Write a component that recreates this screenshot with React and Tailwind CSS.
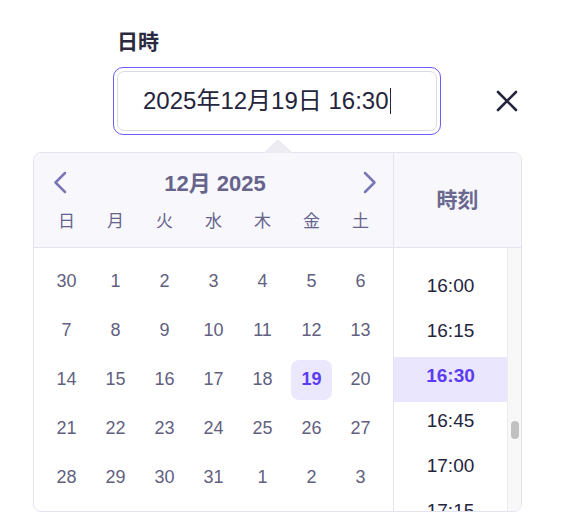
import { useLayoutEffect, useRef } from 'react'

const weekdays = ['日', '月', '火', '水', '木', '金', '土']

const days = [
  30, 1, 2, 3, 4, 5, 6,
  7, 8, 9, 10, 11, 12, 13,
  14, 15, 16, 17, 18, 19, 20,
  21, 22, 23, 24, 25, 26, 27,
  28, 29, 30, 31, 1, 2, 3,
]

const times = []
for (let h = 0; h < 24; h++) {
  for (let m = 0; m < 60; m += 15) {
    times.push(`${String(h).padStart(2, '0')}:${String(m).padStart(2, '0')}`)
  }
}

function Chevron({ dir }) {
  return (
    <svg width="16" height="24" viewBox="0 0 16 24" fill="none">
      <path
        d={dir === 'left' ? 'M13 2 L3.5 11.5 L13 21' : 'M3 2 L12.5 11.5 L3 21'}
        stroke="#7a76b6"
        strokeWidth="2.5"
        strokeLinecap="round"
        strokeLinejoin="round"
      />
    </svg>
  )
}

function App() {
  const listRef = useRef(null)

  useLayoutEffect(() => {
    // 15:45 sits 26px above the top edge
    if (listRef.current) listRef.current.scrollTop = 63 * 45 + 26
  }, [])

  return (
    <div className="pt-[28px] pl-[33px] w-[522px] font-['Liberation_Sans','Noto_Sans_CJK_JP',sans-serif]">
      <div className="ml-[84px] h-[28px] leading-[28px] text-[21px] font-bold text-[#2a293f]">日時</div>

      <div className="mt-[11px] flex items-center">
        <div className="ml-[80px] w-[328px] h-[68px] border border-[#6c5cf5] rounded-[10px] p-[3px]">
          <div className="h-[60px] rounded-[7px] border border-[#dadae1] pl-[25px] flex items-center text-[24px] text-[#25243d]">
            <span>2025年12月19日 16:30</span>
            <span className="ml-[1px] w-[1.5px] h-[26px] bg-[#25243d]" />
          </div>
        </div>
        <button className="ml-[55px] w-[22px] h-[22px] flex items-center justify-center">
          <svg width="22" height="22" viewBox="0 0 22 22" fill="none">
            <path d="M2 2 L20 20 M20 2 L2 20" stroke="#25243f" strokeWidth="2.6" strokeLinecap="round" />
          </svg>
        </button>
      </div>

      <div className="mt-[17px] relative w-[489px] border border-[#e4e3ef] rounded-[8px] flex">
        <svg className="absolute left-[230px] top-[-14px]" width="28" height="14" viewBox="0 0 28 14">
          <polygon points="0,14 14,1 28,14" fill="#ececf2" />
          <polyline points="0,14 14,1 28,14" fill="none" stroke="#e4e3ef" strokeWidth="1" />
        </svg>

        <div className="w-[359px] flex flex-col">
          <div className="bg-[#f7f7fc] border-b border-[#e4e3ef] rounded-tl-[7px] pt-[12px] pb-[10px] px-[8px]">
            <div className="h-[36px] grid grid-cols-[auto_1fr_auto] items-center pl-[10px] pr-[7px]">
              <Chevron dir="left" />
              <div className="text-center text-[22px] font-bold text-[#67648c]">12月 2025</div>
              <Chevron dir="right" />
            </div>
            <div className="mt-[6px] h-[30px] grid grid-cols-7 items-center text-center text-[17px] text-[#67648c]">
              {weekdays.map(d => (
                <div key={d}>{d}</div>
              ))}
            </div>
          </div>

          <div className="px-[8px] py-[9px] grid grid-cols-7">
            {days.map((d, i) => (
              <div key={i} className="h-[49px] flex items-center justify-center text-[18px] text-[#62607f]">
                {i === 19 ? (
                  <div className="w-[41px] h-[40px] rounded-[8px] bg-[#ebe8fd] flex items-center justify-center font-bold text-[#5a3df0]">
                    {d}
                  </div>
                ) : (
                  d
                )}
              </div>
            ))}
          </div>
        </div>

        <div className="flex-1 border-l border-[#e4e3ef] flex flex-col">
          <div className="h-[95px] bg-[#f7f7fc] border-b border-[#e4e3ef] rounded-tr-[7px] flex items-center justify-center text-[21px] font-bold text-[#6a6890]">
            時刻
          </div>
          <div className="flex h-[263px]">
            <div ref={listRef} className="flex-1 overflow-hidden">
              {times.map(t => (
                <div
                  key={t}
                  className={
                    t === '16:30'
                      ? 'h-[45px] pb-[6px] flex items-center justify-center text-[19px] font-bold text-[#5b3cf3] bg-[#e9e6fd]'
                      : 'h-[45px] pb-[6px] flex items-center justify-center text-[19px] text-[#25243d]'
                  }
                >
                  {t}
                </div>
              ))}
            </div>
            <div className="relative w-[14px] bg-[#f8f8f8] border-l border-[#ececf0] rounded-br-[7px]">
              <div className="absolute left-[3px] top-[173px] w-[8px] h-[18px] rounded-full bg-[#c1c1c1]" />
            </div>
          </div>
        </div>
      </div>
    </div>
  )
}

export default App
